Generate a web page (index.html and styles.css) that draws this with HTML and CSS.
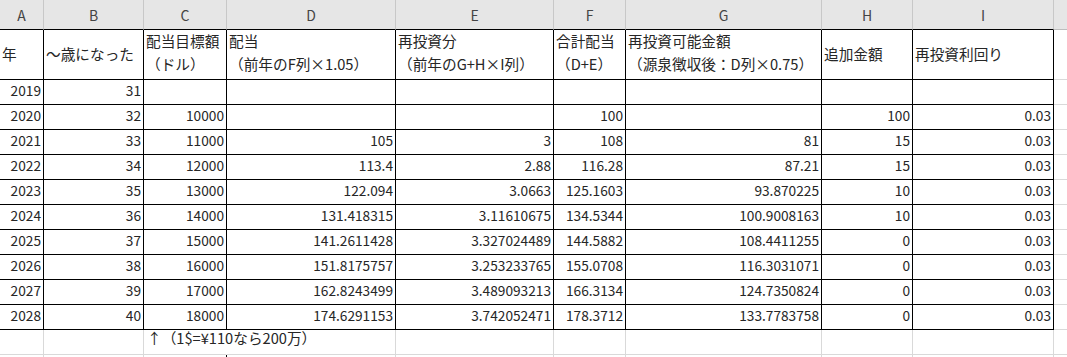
FILE: index.html
```html
<!DOCTYPE html>
<html lang="ja">
<head>
<meta charset="utf-8">
<title>配当シミュレーション</title>
<link rel="stylesheet" href="styles.css">
</head>
<body>
<div class="sheet">
  <div class="row">
    <div class="ch">A</div><div class="ch">B</div><div class="ch">C</div><div class="ch">D</div><div class="ch">E</div><div class="ch">F</div><div class="ch">G</div><div class="ch">H</div><div class="ch">I</div><div class="ch ch-j"></div>
  </div>
  <div class="row">
    <div class="c t">年</div>
    <div class="c t">～歳になった</div>
    <div class="c t two"><span>配当目標額</span><span>（ドル）</span></div>
    <div class="c t two"><span>配当</span><span>（前年のF列×1.05）</span></div>
    <div class="c t two"><span>再投資分</span><span>（前年のG+H×I列）</span></div>
    <div class="c t two"><span>合計配当</span><span>（D+E）</span></div>
    <div class="c t two"><span>再投資可能金額</span><span>（源泉徴収後：D列×0.75）</span></div>
    <div class="c t">追加金額</div>
    <div class="c t">再投資利回り</div>
    <div class="j"></div>
  </div>
  <div class="row">
    <div class="c n">2019</div><div class="c n">31</div><div class="c n"></div><div class="c n"></div><div class="c n"></div><div class="c n"></div><div class="c n"></div><div class="c n"></div><div class="c n"></div><div class="j"></div>
  </div>
  <div class="row">
    <div class="c n">2020</div><div class="c n">32</div><div class="c n">10000</div><div class="c n"></div><div class="c n"></div><div class="c n">100</div><div class="c n"></div><div class="c n">100</div><div class="c n">0.03</div><div class="j"></div>
  </div>
  <div class="row">
    <div class="c n">2021</div><div class="c n">33</div><div class="c n">11000</div><div class="c n">105</div><div class="c n">3</div><div class="c n">108</div><div class="c n">81</div><div class="c n">15</div><div class="c n">0.03</div><div class="j"></div>
  </div>
  <div class="row">
    <div class="c n">2022</div><div class="c n">34</div><div class="c n">12000</div><div class="c n">113.4</div><div class="c n">2.88</div><div class="c n">116.28</div><div class="c n">87.21</div><div class="c n">15</div><div class="c n">0.03</div><div class="j"></div>
  </div>
  <div class="row">
    <div class="c n">2023</div><div class="c n">35</div><div class="c n">13000</div><div class="c n">122.094</div><div class="c n">3.0663</div><div class="c n">125.1603</div><div class="c n">93.870225</div><div class="c n">10</div><div class="c n">0.03</div><div class="j"></div>
  </div>
  <div class="row">
    <div class="c n">2024</div><div class="c n">36</div><div class="c n">14000</div><div class="c n">131.418315</div><div class="c n">3.11610675</div><div class="c n">134.5344</div><div class="c n">100.9008163</div><div class="c n">10</div><div class="c n">0.03</div><div class="j"></div>
  </div>
  <div class="row">
    <div class="c n">2025</div><div class="c n">37</div><div class="c n">15000</div><div class="c n">141.2611428</div><div class="c n">3.327024489</div><div class="c n">144.5882</div><div class="c n">108.4411255</div><div class="c n">0</div><div class="c n">0.03</div><div class="j"></div>
  </div>
  <div class="row">
    <div class="c n">2026</div><div class="c n">38</div><div class="c n">16000</div><div class="c n">151.8175757</div><div class="c n">3.253233765</div><div class="c n">155.0708</div><div class="c n">116.3031071</div><div class="c n">0</div><div class="c n">0.03</div><div class="j"></div>
  </div>
  <div class="row">
    <div class="c n">2027</div><div class="c n">39</div><div class="c n">17000</div><div class="c n">162.8243499</div><div class="c n">3.489093213</div><div class="c n">166.3134</div><div class="c n">124.7350824</div><div class="c n">0</div><div class="c n">0.03</div><div class="j"></div>
  </div>
  <div class="row">
    <div class="c n">2028</div><div class="c n">40</div><div class="c n">18000</div><div class="c n">174.6291153</div><div class="c n">3.742052471</div><div class="c n">178.3712</div><div class="c n">133.7783758</div><div class="c n">0</div><div class="c n">0.03</div><div class="j"></div>
  </div>
  <div class="row">
    <div class="g"></div><div class="g"></div><div class="g note">↑（1$=¥110なら200万）</div><div class="g"></div><div class="g"></div><div class="g"></div><div class="g"></div><div class="g"></div><div class="g"></div><div class="j"></div>
  </div>
  <div class="row">
    <div class="g"></div><div class="g"></div><div class="g edge"></div><div class="g"></div><div class="g"></div><div class="g"></div><div class="g"></div><div class="g"></div><div class="g"></div><div class="j"></div>
  </div>
</div>
</body>
</html>
```

FILE: styles.css
```css
html, body {
  margin: 0;
  padding: 0;
  background: #ffffff;
  overflow: hidden;
}

body {
  font-family: "Noto Sans CJK JP", "Noto Sans", sans-serif;
  color: #262626;
}

.sheet {
  display: grid;
  grid-template-columns: 44px 100px 83px 169px 158px 72px 196px 91px 141px 1fr;
  grid-template-rows: 30px 50px repeat(10, 25px) 25px 25px;
  width: 1067px;
  height: 357px;
  overflow: hidden;
}

.sheet > .row {
  display: contents;
}

.sheet div {
  box-sizing: border-box;
}

/* column letters */
.ch {
  background: #e6e6e6;
  border-right: 1px solid #c8c8c8;
  border-bottom: 1px solid #000000;
  color: #444444;
  font-size: 14px;
  line-height: 29px;
  padding-top: 1px;
  text-align: center;
}

.ch-j {
  border-right: none;
  border-bottom-color: #bdbdbd;
}

/* table cells */
.c {
  border-right: 1px solid #000000;
  border-bottom: 1px solid #000000;
}

.t {
  display: flex;
  flex-direction: column;
  justify-content: center;
  padding: 0 0 3px 2px;
  font-size: 14.67px;
  line-height: 23px;
  white-space: nowrap;
}

.t.two {
  padding-bottom: 5px;
}

.n {
  font-size: 13.7px;
  line-height: 20px;
  text-align: right;
  padding-right: 2px;
  white-space: nowrap;
}

/* cells outside the bordered table */
.g {
  border-right: 1px solid #d9d9d9;
  border-bottom: 1px solid #d9d9d9;
}

.j {
  border-bottom: 1px solid #d9d9d9;
}

.note {
  border-right-color: transparent;
  font-size: 14.67px;
  line-height: 16px;
  padding-left: 3px;
  white-space: nowrap;
}

.edge {
  border-right-color: #000000;
}
```
